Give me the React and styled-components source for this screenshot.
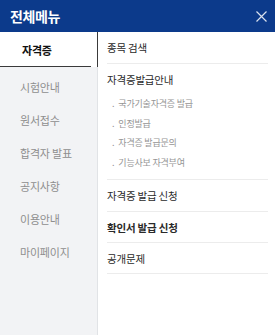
import React from "react";
import styled, { createGlobalStyle } from "styled-components";

const GlobalStyle = createGlobalStyle`
  html, body {
    margin: 0;
    padding: 0;
    background: #fff;
  }
  body {
    font-family: "Noto Sans CJK KR", "Noto Sans", sans-serif;
  }
  * {
    box-sizing: border-box;
  }
`;

const tabs = ["자격증", "시험안내", "원서접수", "합격자 발표", "공지사항", "이용안내", "마이페이지"];

const App = () => {
  return (
    <>
      <GlobalStyle />
      <Wrapper>
        <Header>
          <Title>전체메뉴</Title>
          <CloseButton aria-label="닫기">
            <svg width="11" height="11" viewBox="0 0 11 11">
              <path d="M0.5 0.5 L10.5 10.5 M10.5 0.5 L0.5 10.5" stroke="rgba(255,255,255,0.85)" strokeWidth="1.2" />
            </svg>
          </CloseButton>
        </Header>
        <Body>
          <Sidebar>
            {tabs.map((t, i) => (
              <Tab key={t} $active={i === 0}>
                {t}
              </Tab>
            ))}
          </Sidebar>
          <Content>
            <MenuRow>종목 검색</MenuRow>
            <MenuGroup>
              <GroupTitle>자격증발급안내</GroupTitle>
              <SubList>
                <SubItem>국가기술자격증 발급</SubItem>
                <SubItem>인정발급</SubItem>
                <SubItem>자격증 발급문의</SubItem>
                <SubItem>기능사보 자격부여</SubItem>
              </SubList>
            </MenuGroup>
            <MenuRow $h={32}>자격증 발급 신청</MenuRow>
            <MenuRow $bold $h={31}>확인서 발급 신청</MenuRow>
            <MenuRow $h={31}>공개문제</MenuRow>
          </Content>
        </Body>
      </Wrapper>
    </>
  );
};

export default App;

const Wrapper = styled.div`
  width: 275px;
  height: 335px;
  display: flex;
  flex-direction: column;
  overflow: hidden;
`;

const Header = styled.div`
  height: 32px;
  background: #0c3a8b;
  display: flex;
  align-items: center;
  justify-content: space-between;
  padding: 0 8px 0 10px;
`;

const Title = styled.h1`
  margin: 0;
  color: #fff;
  font-size: 14px;
  font-weight: 700;
  letter-spacing: -0.4px;
`;

const CloseButton = styled.button`
  border: 0;
  background: none;
  padding: 0;
  width: 11px;
  height: 11px;
  display: flex;
  margin-top: 1px;
`;

const Body = styled.div`
  flex: 1;
  display: flex;
`;

const Sidebar = styled.div`
  width: 98px;
  background: #f2f3f5;
  border-right: 1px solid #e1e3e6;
  display: flex;
  flex-direction: column;
`;

const Tab = styled.div`
  position: relative;
  height: ${(p) => (p.$active ? "35px" : "33px")};
  padding-left: ${(p) => (p.$active ? "22px" : "20px")};
  display: flex;
  align-items: center;
  font-size: 11px;
  letter-spacing: -0.2px;
  color: ${(p) => (p.$active ? "#111" : "#8e8e8e")};
  font-weight: ${(p) => (p.$active ? 700 : 400)};
  background: ${(p) => (p.$active ? "#fff" : "transparent")};
  margin-right: ${(p) => (p.$active ? "-1px" : "0")};
  border-right: ${(p) => (p.$active ? "1px solid #3a3a3a" : "0")};
  margin-bottom: ${(p) => (p.$active ? "3px" : "0")};

  &::after {
    content: "";
    display: ${(p) => (p.$active ? "block" : "none")};
    position: absolute;
    left: 0;
    bottom: 0;
    width: 91px;
    height: 1px;
    background: #3a3a3a;
  }
`;

const Content = styled.div`
  flex: 1;
  padding: 0 7px 0 9px;
  display: flex;
  flex-direction: column;
`;

const MenuRow = styled.div`
  height: ${(p) => p.$h || 32}px;
  display: flex;
  align-items: center;
  font-size: 10.5px;
  letter-spacing: -0.2px;
  color: #2a2a2a;
  font-weight: ${(p) => (p.$bold ? 700 : 400)};
  border-bottom: 1px solid #ececec;
`;

const MenuGroup = styled.div`
  padding: 8px 0 7px;
  border-bottom: 1px solid #ececec;
`;

const GroupTitle = styled.div`
  font-size: 10.5px;
  letter-spacing: -0.2px;
  color: #2a2a2a;
  line-height: 16px;
  margin-bottom: 6px;
`;

const SubList = styled.ul`
  list-style: none;
  margin: 0;
  padding: 0 0 0 5px;
`;

const SubItem = styled.li`
  font-size: 9px;
  color: #959595;
  line-height: 19.5px;
  letter-spacing: -0.2px;

  &::before {
    content: ".";
    margin-right: 4px;
  }
`;
